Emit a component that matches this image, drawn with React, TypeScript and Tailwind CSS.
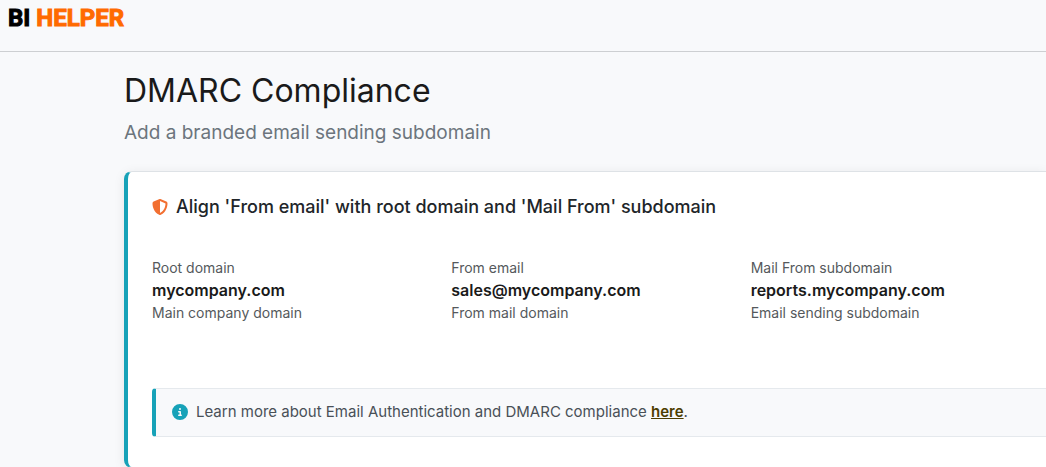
import { FaCircleInfo, FaShieldHalved } from "react-icons/fa6";

type Field = { label: string; value: string; note: string };

const fields: Field[] = [
  { label: "Root domain", value: "mycompany.com", note: "Main company domain" },
  { label: "From email", value: "sales@mycompany.com", note: "From mail domain" },
  { label: "Mail From subdomain", value: "reports.mycompany.com", note: "Email sending subdomain" },
];

function Header() {
  return (
    <header className="h-13 border-b border-[#cdcfd2] px-2 pt-1">
      <a
        href="#"
        className="inline-block font-['Roboto',sans-serif] text-2xl leading-7 font-bold whitespace-nowrap text-black [-webkit-text-stroke:1px_currentColor]"
      >
        BI <span className="text-[#ff6a00]">HELPER</span>
      </a>
    </header>
  );
}

function DomainField({ label, value, note }: Field) {
  return (
    <div>
      <dt className="text-sm leading-[22px] text-[#55595c]">{label}</dt>
      <dd className="text-base leading-[23px] font-semibold text-[#1a1a1a]">{value}</dd>
      <dd className="text-sm leading-[22px] text-[#55595c]">{note}</dd>
    </div>
  );
}

export default function App() {
  return (
    <div className="min-h-screen overflow-x-hidden bg-[#f8f9fb] font-['Inter',sans-serif]">
      <Header />
      <main className="pt-4 pl-31">
        <h1 className="text-[32px] leading-[46px] text-[#1a1a1a]">DMARC Compliance</h1>
        <p className="mt-1 text-[19px] leading-[30px] text-[#6c757d]">Add a branded email sending subdomain</p>

        <section className="mt-[23px] rounded-l-lg border-y border-l-4 border-y-[#dee2e6] border-l-[#17a2b8] bg-white pt-6 pb-[30px] pl-6 shadow-[0_2px_12px_rgba(0,0,0,0.08)]">
          <h2 className="flex items-center gap-2 text-lg leading-[22px] font-medium text-[#212529]">
            <FaShieldHalved className="size-4 text-[#f26f31]" aria-hidden="true" />
            Align 'From email' with root domain and 'Mail From' subdomain
          </h2>

          <dl className="-mr-1 mt-[39px] grid grid-cols-3 pb-16">
            {fields.map((field) => (
              <DomainField key={field.label} {...field} />
            ))}
          </dl>

          <aside className="flex items-center gap-2 rounded-l border-y border-l-4 border-y-[#e5e9ed] border-l-[#17a2b8] bg-[#f8f9fb] pt-[11px] pb-3 pl-4 text-[15px] leading-6 text-[#495057]">
            <FaCircleInfo className="size-4 text-[#17a2b8]" aria-hidden="true" />
            <p>
              Learn more about Email Authentication and DMARC compliance{" "}
              <a href="#" className="font-semibold text-[#4d3d00] underline">
                here
              </a>
              .
            </p>
          </aside>
        </section>
      </main>
    </div>
  );
}
